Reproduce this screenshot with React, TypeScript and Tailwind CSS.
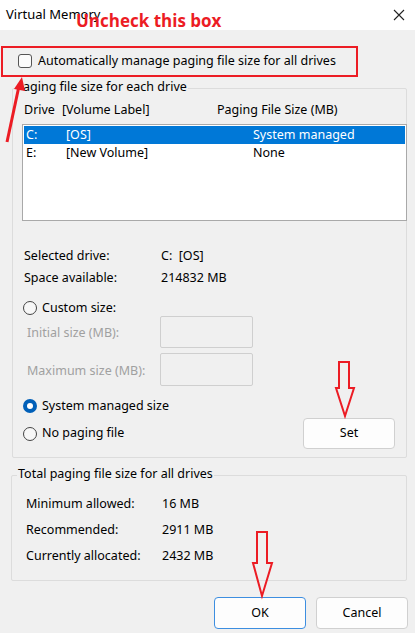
import React from "react";

function Radio({ checked }: { checked?: boolean }) {
  return checked ? (
    <span className="w-[14px] h-[14px] rounded-full bg-[#005fb8] flex items-center justify-center shrink-0">
      <span className="w-[6px] h-[6px] rounded-full bg-white" />
    </span>
  ) : (
    <span className="w-[14px] h-[14px] rounded-full border border-[#444] bg-[#f7f7f7] shrink-0" />
  );
}

export default function App() {
  return (
    <div
      className="relative w-[415px] h-[633px] bg-[#f0f0f0] overflow-hidden text-[12.5px] text-black leading-none"
      style={{ fontFamily: '"Noto Sans", "Open Sans", sans-serif' }}
    >
      {/* Title bar */}
      <div className="h-[30px] bg-white flex items-center justify-between pl-[6px] pr-[10px]">
        <span className="text-[13px] -mt-[2px]">Virtual Memory</span>
        <svg width="12" height="12" viewBox="0 0 12 12">
          <path d="M1 1 L11 11 M11 1 L1 11" stroke="#222" strokeWidth="1.1" />
        </svg>
      </div>

      {/* Checkbox row */}
      <div className="mt-[16px] h-[30px] pl-[18px] flex items-center gap-[6px]">
        <span className="w-[14px] h-[14px] rounded-[3px] border border-[#555] bg-[#fbfbfb] shrink-0" />
        <span>Automatically manage paging file size for all drives</span>
      </div>

      {/* Group 1 */}
      <div className="relative mt-[12px] ml-[12px] w-[395px] h-[370px] border border-[#dcdcdc] rounded-[2px]">
        <span className="absolute left-[9px] -top-[8px] px-[1px] bg-[#f0f0f0]">aging file size for each drive</span>

        <div className="pt-[13px] h-[30px] pl-[11px] flex items-center">
          <span className="w-[38px]">Drive</span>
          <span className="w-[155px]">[Volume Label]</span>
          <span>Paging File Size (MB)</span>
        </div>

        <div className="mt-[5px] ml-[9px] w-[385px] h-[97px] border border-[#a9a9a9] bg-white p-[1px]">
          <div className="h-[18px] bg-[#0078d7] text-white flex items-center pl-[2px]">
            <span className="w-[40px]">C:</span>
            <span className="w-[187px]">[OS]</span>
            <span>System managed</span>
          </div>
          <div className="h-[19px] flex items-center pl-[2px]">
            <span className="w-[40px]">E:</span>
            <span className="w-[187px]">[New Volume]</span>
            <span>None</span>
          </div>
        </div>

        <div className="mt-[24px] pl-[11px]">
          <div className="h-[22px] flex items-center">
            <span className="w-[137px]">Selected drive:</span>
            <span>C:&nbsp;&nbsp;[OS]</span>
          </div>
          <div className="h-[22px] flex items-center">
            <span className="w-[137px]">Space available:</span>
            <span>214832 MB</span>
          </div>
        </div>

        <div className="mt-[11px] h-[16px] pl-[10px] flex items-center gap-[5px]">
          <Radio />
          <span>Custom size:</span>
        </div>

        <div className="h-[32px] pl-[14px] flex items-center">
          <span className="w-[133px] text-[#a0a0a0] pt-[3px]">Initial size (MB):</span>
          <span className="w-[93px] h-[32px] border border-[#cfcfcf] rounded-[2px] bg-[#f0f0f0]" />
        </div>
        <div className="mt-[5px] h-[33px] pl-[14px] flex items-center">
          <span className="w-[133px] text-[#a0a0a0] pt-[3px]">Maximum size (MB):</span>
          <span className="w-[93px] h-[33px] border border-[#cfcfcf] rounded-[2px] bg-[#f0f0f0]" />
        </div>

        <div className="mt-[12px] h-[16px] pl-[10px] flex items-center gap-[5px]">
          <Radio checked />
          <span>System managed size</span>
        </div>

        <div className="mt-[4px] h-[31px] pl-[10px] pr-[11px] flex items-center justify-between">
          <div className="flex items-center gap-[5px]">
            <Radio />
            <span>No paging file</span>
          </div>
          <button className="w-[92px] h-[31px] bg-[#fdfdfd] border border-[#d0d0d0] rounded-[4px] flex items-center justify-center">
            Set
          </button>
        </div>
      </div>

      {/* Group 2 */}
      <div className="relative mt-[17px] ml-[11px] w-[396px] h-[106px] border border-[#dcdcdc] rounded-[2px]">
        <span className="absolute left-[5px] -top-[8px] px-[1px] bg-[#f0f0f0]">Total paging file size for all drives</span>
        <div className="pt-[16px] pl-[14px]">
          <div className="h-[25px] flex items-center">
            <span className="w-[136px]">Minimum allowed:</span>
            <span>16 MB</span>
          </div>
          <div className="h-[26px] flex items-center">
            <span className="w-[136px]">Recommended:</span>
            <span>2911 MB</span>
          </div>
          <div className="h-[26px] flex items-center">
            <span className="w-[136px]">Currently allocated:</span>
            <span>2432 MB</span>
          </div>
        </div>
      </div>

      {/* Buttons */}
      <div className="mt-[16px] pr-[7px] flex justify-end gap-[10px]">
        <button className="w-[92px] h-[32px] bg-[#fdfdfd] border border-[#3d8ee0] rounded-[4px] flex items-center justify-center">
          OK
        </button>
        <button className="w-[92px] h-[32px] bg-[#fdfdfd] border border-[#d0d0d0] rounded-[4px] flex items-center justify-center">
          Cancel
        </button>
      </div>

      {/* Annotations */}
      <div
        className="absolute left-[76px] top-[12px] text-[17px] font-bold text-[#ec1c24]"
        style={{ fontFamily: '"Open Sans", "Noto Sans", sans-serif' }}
      >
        Uncheck this box
      </div>
      <div className="absolute left-[1px] top-[46px] w-[357px] h-[31px] border-2 border-[#ec1c24] pointer-events-none" />
      <svg className="absolute left-0 top-0 pointer-events-none" width="415" height="633" viewBox="0 0 415 633">
        <line x1="7" y1="142" x2="19" y2="86" stroke="#ec1c24" strokeWidth="3" />
        <polygon points="22,77 14,89 25,91" fill="#ec1c24" />
        <polygon
          points="339,362 349,362 349,388 354,388 345,416 336,388 339,388"
          fill="none"
          stroke="#ec1c24"
          strokeWidth="2"
          strokeLinejoin="miter"
        />
        <polygon
          points="257,532 267,532 267,563 272,563 262,596 253,563 257,563"
          fill="none"
          stroke="#ec1c24"
          strokeWidth="2"
          strokeLinejoin="miter"
        />
      </svg>
    </div>
  );
}
